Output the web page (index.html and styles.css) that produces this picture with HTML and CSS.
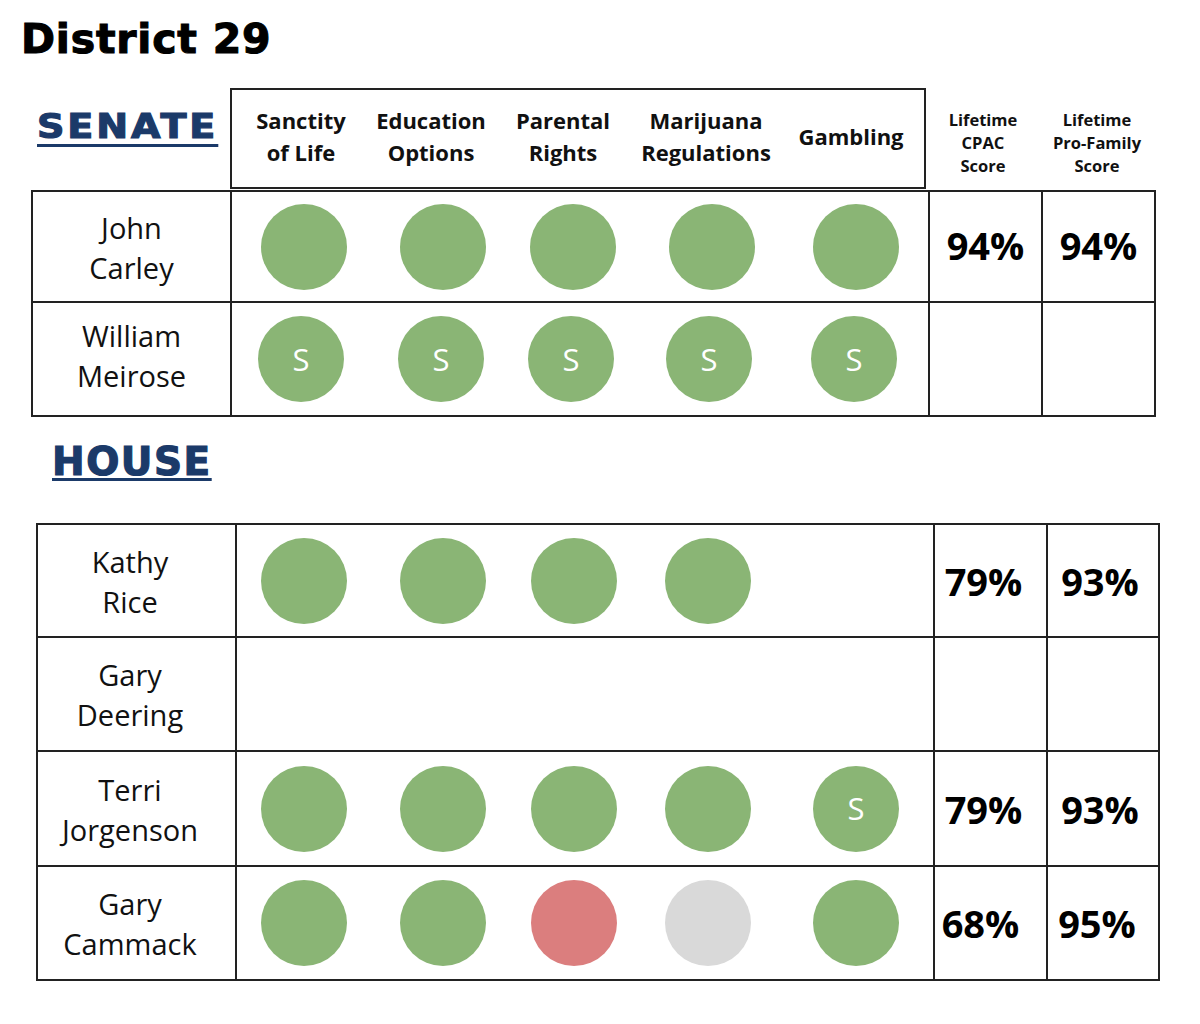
FILE: index.html
```html
<!DOCTYPE html>
<html>
<head>
<meta charset="utf-8">
<link rel="stylesheet" href="styles.css">
</head>
<body>
<h1 class="title">District 29</h1>

<section class="senate">
  <div class="head">
    <div class="chamber senate-title"><span class="chamber-text">SENATE</span></div>
    <div class="issues">
      <div class="issue">Sanctity<br>of Life</div>
      <div class="issue">Education<br>Options</div>
      <div class="issue">Parental<br>Rights</div>
      <div class="issue">Marijuana<br>Regulations</div>
      <div class="issue">Gambling</div>
    </div>
    <div class="score-head">Lifetime<br>CPAC<br>Score</div>
    <div class="score-head">Lifetime<br>Pro-Family<br>Score</div>
  </div>
  <table class="grid grid-senate">
    <colgroup><col class="c-name"><col class="c-dots"><col class="c-score"><col class="c-score"></colgroup>
    <tr class="r1">
      <td class="name">John<br>Carley</td>
      <td class="dots-cell"><div class="dots">
        <span class="dot g"></span><span class="dot g"></span><span class="dot g"></span><span class="dot g"></span><span class="dot g"></span>
      </div></td>
      <td class="score">94%</td><td class="score">94%</td>
    </tr>
    <tr class="r2">
      <td class="name">William<br>Meirose</td>
      <td class="dots-cell"><div class="dots dots-s2">
        <span class="dot g">S</span><span class="dot g">S</span><span class="dot g">S</span><span class="dot g">S</span><span class="dot g">S</span>
      </div></td>
      <td class="score"></td><td class="score"></td>
    </tr>
  </table>
</section>

<section class="house">
  <div class="chamber house-title"><span class="chamber-text">HOUSE</span></div>
  <table class="grid grid-house">
    <colgroup><col class="c-name"><col class="c-dots"><col class="c-score"><col class="c-score2"></colgroup>
    <tr class="h1">
      <td class="name">Kathy<br>Rice</td>
      <td class="dots-cell"><div class="dots">
        <span class="dot g"></span><span class="dot g"></span><span class="dot g"></span><span class="dot g"></span><span class="dot none"></span>
      </div></td>
      <td class="score s3">79%</td><td class="score s4">93%</td>
    </tr>
    <tr class="h2">
      <td class="name">Gary<br>Deering</td>
      <td class="dots-cell"></td>
      <td class="score"></td><td class="score"></td>
    </tr>
    <tr class="h3">
      <td class="name">Terri<br>Jorgenson</td>
      <td class="dots-cell"><div class="dots">
        <span class="dot g"></span><span class="dot g"></span><span class="dot g"></span><span class="dot g"></span><span class="dot g">S</span>
      </div></td>
      <td class="score s3">79%</td><td class="score s4">93%</td>
    </tr>
    <tr class="h4">
      <td class="name">Gary<br>Cammack</td>
      <td class="dots-cell"><div class="dots">
        <span class="dot g"></span><span class="dot g"></span><span class="dot r"></span><span class="dot n"></span><span class="dot g"></span>
      </div></td>
      <td class="score s3 shift">68%</td><td class="score s4 shift">95%</td>
    </tr>
  </table>
</section>
</body>
</html>
```

FILE: styles.css
```css
html, body {
  margin: 0;
  padding: 0;
  background: #fff;
}
body {
  font-family: "Open Sans", "Liberation Sans", sans-serif;
  color: #111;
  width: 1200px;
}

.title {
  font-family: "DejaVu Sans", "Liberation Sans", sans-serif;
  font-weight: 700;
  font-size: 41px;
  line-height: 48px;
  margin: 15px 0 0 21px;
  color: #000;
  letter-spacing: 0.8px;
  -webkit-text-stroke: 1.1px #000;
}

.chamber-text {
  font-family: "DejaVu Sans", "Liberation Sans", sans-serif;
  font-weight: 700;
  color: #1b3a69;
  -webkit-text-stroke: 1.2px #1b3a69;
  text-decoration: underline;
  text-decoration-thickness: 3px;
}

/* Senate */
.senate {
  margin: 25px 0 0 31px;
}
.head {
  display: grid;
  grid-template-columns: 199px 696px 114px 114px;
  height: 101px;
}
.senate-title {
  padding: 21px 0 0 6px;
  line-height: 34px;
}
.senate-title .chamber-text {
  display: inline-block;
  font-size: 34px;
  letter-spacing: 2.6px;
  text-underline-offset: 6px;
  transform: scaleX(1.12);
  transform-origin: left center;
}
.issues {
  border: 2px solid #222;
  display: grid;
  grid-template-columns: 138px 122px 142px 144px 146px;
  align-items: center;
  font-weight: 700;
  font-size: 22px;
  line-height: 32px;
  text-align: center;
  color: #111;
  padding-bottom: 6px;
}
.score-head {
  font-weight: 700;
  font-size: 16.5px;
  line-height: 23px;
  text-align: center;
  padding-top: 20px;
  color: #111;
}

.grid {
  border-collapse: collapse;
  table-layout: fixed;
}
.grid td {
  border: 2px solid #222;
  padding: 0;
  text-align: center;
  vertical-align: middle;
}
.grid-senate {
  margin-top: 1px;
  width: 1124px;
}
.c-name { width: 199px; }
.c-dots { width: 698px; }
.c-score { width: 113px; }
.c-score2 { width: 112px; }

.grid td.name {
  font-size: 29px;
  line-height: 40px;
  color: #111;
  padding-top: 4px;
  padding-bottom: 2px;
}
.grid td.score {
  font-weight: 700;
  font-size: 38px;
  color: #000;
  padding-top: 1px;
  padding-bottom: 5px;
}
.grid-senate .r2 td.name {
  padding-top: 0;
  padding-bottom: 6px;
}

.grid-senate .r1 td { height: 103px; }
.grid-senate .r2 td { height: 106px; }

.dots {
  display: grid;
  grid-template-columns: 144px 134px 126px 152px 136px;
  justify-items: center;
  align-items: center;
}
.dots-s2 {
  grid-template-columns: 138px 142px 118px 158px 132px;
}
.dot {
  width: 86px;
  height: 86px;
  border-radius: 50%;
  display: flex;
  align-items: center;
  justify-content: center;
  color: #fff;
  font-size: 31px;
  line-height: 1;
}
.dot.g { background: #8ab575; }
.dot.r { background: #db7e7e; }
.dot.n { background: #d9d9d9; }
.dot.none { background: transparent; }

/* House */
.house {
  margin: 25px 0 0 36px;
}
.house-title {
  padding-left: 16px;
  line-height: 40px;
}
.house-title .chamber-text {
  font-size: 39px;
  letter-spacing: 1.5px;
  text-underline-offset: 3px;
}
.grid-house {
  margin-top: 34px;
  width: 1124px;
}
.grid-house .dots {
  grid-template-columns: 134px 144px 118px 150px 146px;
}
.grid-house .h1 td { height: 105px; }
.grid-house .h2 td { height: 106px; }
.grid-house .h3 td { height: 107px; }
.grid-house .h4 td { height: 106px; }
.grid-house td.name { padding-right: 13px; padding-top: 4px; padding-bottom: 2px; }
.grid-house td.score { padding-top: 3px; padding-bottom: 3px; }
.grid-house td.s3 { padding-right: 14px; }
.grid-house td.s4 { padding-right: 6px; }
.grid-house td.s3.shift { padding-right: 20px; }
.grid-house td.s4.shift { padding-right: 12px; }
```
